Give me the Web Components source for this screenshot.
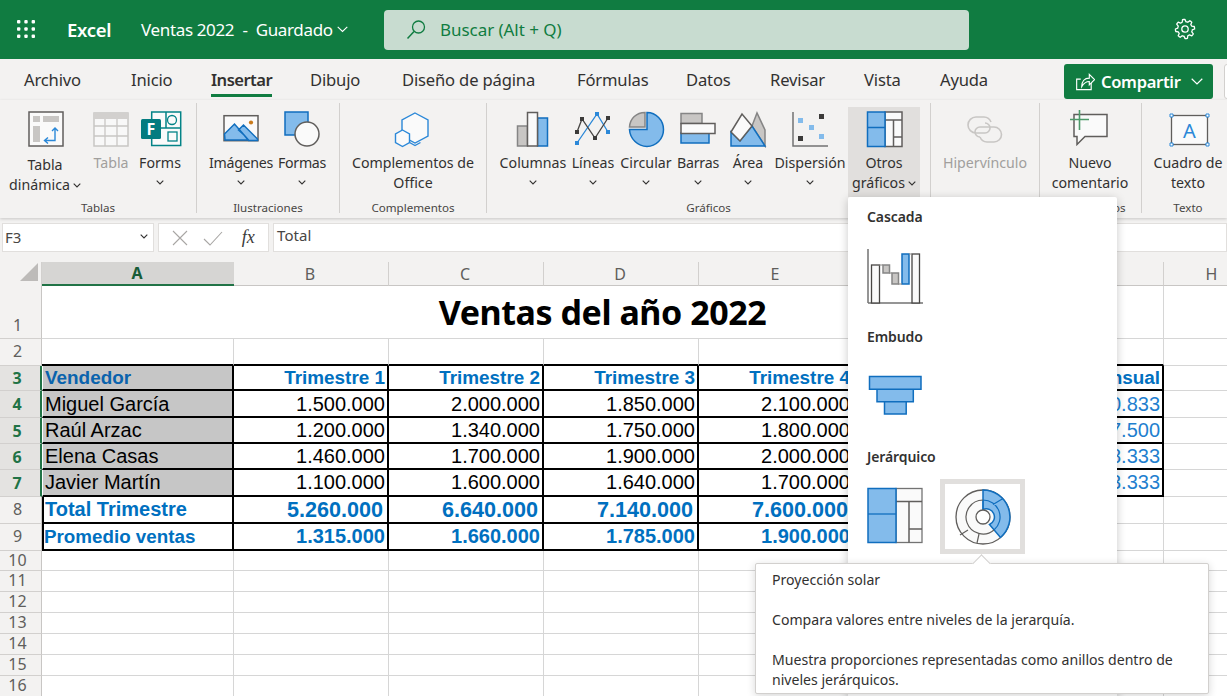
<!DOCTYPE html>
<html lang="es">
<head>
<meta charset="utf-8">
<title>Ventas 2022</title>
<style>
  html, body { margin: 0; height: 100%; overflow: hidden; }
  body { font-family: "Noto Sans", "Open Sans", sans-serif; color: #323130; background: #fff; }
  #app { position: relative; width: 1227px; height: 696px; overflow: hidden; }
</style>
</head>
<body>
<div id="app">
  <xl-titlebar></xl-titlebar>
  <xl-tabs></xl-tabs>
  <xl-ribbon>
    <xl-group label="Tablas" style="width:197px">
      <xl-btn icon="pivot" chev="inline" drop="2" style="width:80px;margin-left:5px">Tabla<br>dinámica</xl-btn>
      <xl-btn icon="table" disabled style="width:42px;margin-left:5px">Tabla</xl-btn>
      <xl-btn icon="forms" chev="block" style="width:48px;margin-left:4px">Forms</xl-btn>
    </xl-group>
    <xl-group label="Ilustraciones" style="width:143px">
      <xl-btn icon="image" chev="block" style="width:66px;margin-left:11px;letter-spacing:-.3px">Imágenes</xl-btn>
      <xl-btn icon="shapes" chev="block" style="width:52px;margin-left:2px;letter-spacing:-.3px">Formas</xl-btn>
    </xl-group>
    <xl-group label="Complementos" style="width:147px">
      <xl-btn icon="addins" style="width:134px;margin-left:6px">Complementos de<br>Office</xl-btn>
    </xl-group>
    <xl-group label="Gráficos" style="width:444px">
      <xl-btn icon="columns" chev="block" style="width:70px;margin-left:11px">Columnas</xl-btn>
      <xl-btn icon="lines" chev="block" style="width:46px;margin-left:2px">Líneas</xl-btn>
      <xl-btn icon="pie" chev="block" style="width:56px;margin-left:2px">Circular</xl-btn>
      <xl-btn icon="bars" chev="block" style="width:44px;margin-left:2px;letter-spacing:-.2px">Barras</xl-btn>
      <xl-btn icon="area" chev="block" style="width:44px;margin-left:6px">Área</xl-btn>
      <xl-btn icon="scatter" chev="block" style="width:76px;margin-left:2px">Dispersión</xl-btn>
      <xl-btn icon="other" chev="inline" active style="width:72px">Otros<br>gráficos</xl-btn>
    </xl-group>
    <xl-group label="" style="width:109px">
      <xl-btn icon="link" disabled style="width:100px;margin-left:4px">Hipervínculo</xl-btn>
    </xl-group>
    <xl-group label="Comentarios" style="width:102px">
      <xl-btn icon="comment" style="width:90px;margin-left:5px">Nuevo<br>comentario</xl-btn>
    </xl-group>
    <xl-group label="Texto" style="width:92px">
      <xl-btn icon="textbox" style="width:92px">Cuadro de<br>texto</xl-btn>
    </xl-group>
  </xl-ribbon>
  <xl-formula-bar cell="F3" value="Total"></xl-formula-bar>
  <xl-sheet></xl-sheet>
  <xl-chart-menu></xl-chart-menu>
  <xl-tooltip>
    <p>Proyección solar</p>
    <p>Compara valores entre niveles de la jerarquía.</p>
    <p>Muestra proporciones representadas como anillos dentro de niveles jerárquicos.</p>
  </xl-tooltip>
</div>

<script>
const ICON_CSS = `
  svg .b { fill: #83bbeb; stroke: #106ebe; stroke-width: 1.5; }
  svg .g { fill: #c8c6c4; stroke: #858585; stroke-width: 1.5; }
  svg .w { fill: #fafafa; stroke: #605e5c; stroke-width: 1.5; }
  svg .l { fill: none; stroke: #605e5c; stroke-width: 1.5; }
`;

// all icons are drawn in page coordinates, the viewBox cuts them out
const ICONS = {
  pivot: ['21 108 48 40', `
    <rect class="w" x="29" y="112" width="34" height="34" stroke="#737373"/>
    <path fill="#c8c6c4" d="M33 116h7v6h-7zM43 116h16v6H43zM33 126h7v16h-7z"/>
    <path fill="none" stroke="#2b88d8" stroke-width="1.4" d="M55 128v12.5H45M52 131l3-3 3 3M48 137.500l-3.500 3 3.500 3"/>`],
  table: ['87 108 48 40', `
    <path fill="#f8f8f8" stroke="#c8c6c4" stroke-width="1.5" d="M94 113h34v33H94z"/>
    <path fill="#d2d0ce" d="M94 113h34v6H94z"/>
    <path fill="none" stroke="#c8c6c4" stroke-width="1.3" d="M94 126h34M94 136h34M105 119v27M117 119v27"/>`],
  forms: ['136 108 48 40', `
    <rect x="151.700" y="112" width="29" height="33.500" fill="#fafafa" stroke="#038387" stroke-width="1.500"/>
    <path fill="none" stroke="#038387" stroke-width="1.500" d="M161 128h19.700M166 112v16"/>
    <circle cx="172" cy="120" r="4.500" fill="none" stroke="#038387" stroke-width="1.300"/>
    <rect x="168" y="132" width="9" height="9" fill="none" stroke="#038387" stroke-width="1.300"/>
    <rect x="141" y="119" width="20" height="20" rx="1.500" fill="#037c80"/>
    <text x="151" y="135" text-anchor="middle" font-family="Noto Sans, sans-serif" font-weight="700" font-size="16" fill="#fff">F</text>`],
  image: ['217 108 48 40', `
    <rect x="224" y="115.700" width="34" height="25" fill="#fafafa" stroke="#605e5c" stroke-width="1.500"/>
    <path class="b" stroke-width="1.200" d="M224.500 134l10-10 14 16h-23.500zM244 135l-5.500-5 5-5 14 14v1.500h-9z"/>
    <circle cx="251" cy="122.500" r="2.100" fill="#ca7b1c"/>`],
  shapes: ['278 108 48 40', `
    <rect class="b" x="285" y="112" width="23" height="23"/>
    <circle class="w" cx="307" cy="134" r="12"/>`],
  addins: ['389 108 48 40', `
    <path fill="#fafafa" stroke="#2b88d8" stroke-width="1.400" d="M415 113l13 7v16l-13 7-13-7v-16z"/>
    <path fill="#fafafa" stroke="#2b88d8" stroke-width="1.400" d="M402.500 130l7 4v8.500l-7 4-7-4V134z"/>
    <path fill="none" stroke="#2b88d8" stroke-width="1.400" d="M409.500 142.500l5.500 3 5.500-3"/>`],
  columns: ['509 108 48 40', `
    <rect class="g" x="517.500" y="126" width="10" height="20"/>
    <rect class="b" x="537.500" y="118" width="10" height="28"/>
    <rect class="w" x="527.500" y="112.500" width="10" height="33.500"/>`],
  lines: ['569 108 48 40', `
    <path fill="none" stroke="#2b88d8" stroke-width="1.300" d="M577 143l20-29 11 18"/>
    <path fill="none" stroke="#484644" stroke-width="1.300" d="M577 132l5-13 13 19 13-20"/>
    <path fill="#2b88d8" d="M575 141h4v4h-4zM595 112h4v4h-4zM606 130h4v4h-4z"/>
    <path fill="#3b3a39" d="M575 130h4v4h-4zM580 117h4v4h-4zM593 136h4v4h-4zM606 116h4v4h-4z"/>`],
  pie: ['622 108 48 40', `
    <path class="g" d="M645 112.500v14.500h-15.500c.5-8.500 7-14.500 15.500-14.500z"/>
    <path class="b" d="M647 112.500c9 0 16.500 7.500 16.500 17s-7.500 17-16.500 17-17-7.500-17.500-17h17.500z"/>`],
  bars: ['674 108 48 40', `
    <rect class="g" x="681" y="113.500" width="21" height="10"/>
    <rect class="b" x="681" y="133" width="28" height="10"/>
    <rect class="w" x="681" y="123.500" width="34" height="10"/>`],
  area: ['724 108 48 40', `
    <path class="g" stroke-width="1.300" d="M752 126l5-13 8 17v16z"/>
    <path class="b" d="M731 132l9 9 12-15 13 20h-34z"/>
    <path class="w" d="M731 132l11-18 10 12-12 15z"/>`],
  scatter: ['786 108 48 40', `
    <path fill="none" stroke="#737373" stroke-width="1.500" d="M793 112v34h35"/>
    <path fill="#83bbeb" d="M798 118h5v5h-5zM809 125h5v5h-5zM819 134h5v5h-5z"/>
    <path fill="#3b3a39" d="M819 114h5v5h-5zM798 136h5v5h-5z"/>`],
  other: ['860 108 48 40', `
    <rect class="w" x="885" y="112" width="17" height="34.500"/>
    <path class="l" d="M885 120h17M893.500 120v26.500M893.500 137h8.500"/>
    <rect class="b" x="867.500" y="112" width="17.500" height="34.500"/>
    <path fill="none" stroke="#106ebe" stroke-width="1.500" d="M867.500 127.500H885"/>`],
  link: ['961 108 48 40', `
    <g fill="none" stroke="#c8c6c4" stroke-width="1.600">
      <path d="M985 133h-9a8 8 0 0 1 0-16h8a8 8 0 0 1 7 5"/>
      <path d="M980 127h14a7.500 7.500 0 0 1 0 15h-7a8 8 0 0 1-7-5"/>
      <path d="M980 127a5 5 0 0 0 0 10M985 133a5 5 0 0 0 0-10"/>
    </g>`],
  comment: ['1066 108 48 40', `
    <path fill="#fafafa" stroke="#605e5c" stroke-width="1.500" d="M1074 114.500h33v22h-22l-8 8v-8h-3z"/>
    <path fill="none" stroke="#4c9a6a" stroke-width="1.600" d="M1079.500 110v20M1070 119.500h19"/>`],
  textbox: ['1164 108 48 40', `
    <rect x="1171.500" y="115.500" width="36" height="29" fill="#fafafa" stroke="#605e5c" stroke-width="1.300"/>
    <path fill="#fff" stroke="#2b88d8" stroke-width="1" d="M1170 114h3v3h-3zM1206 114h3v3h-3zM1170 143h3v3h-3zM1206 143h3v3h-3z"/>
    <text x="1189.500" y="138" text-anchor="middle" font-family="Noto Sans, sans-serif" font-size="20" fill="#2b88d8">A</text>`],
  waterfall: ['866 247 58 58', `
    <path fill="none" stroke="#737373" stroke-width="1.500" d="M868 249v54M868 303h55"/>
    <rect fill="#fafafa" stroke="#484644" stroke-width="1.300" x="871.500" y="265" width="8" height="38"/>
    <rect class="g" x="883" y="265" width="6.500" height="8"/>
    <rect class="g" x="892" y="273" width="6.500" height="11"/>
    <rect class="b" x="902" y="254" width="7" height="30"/>
    <rect fill="#fafafa" stroke="#484644" stroke-width="1.300" x="912" y="254" width="7.500" height="49"/>
    <path fill="none" stroke="#8a8886" d="M879 265h4M889 273h3M898 284h4M909 254h3"/>`],
  funnel: ['866 367 58 58', `
    <path class="b" d="M869.500 376.500h51.500v12.700h-51.500zM877 389.200h36.300v12.500H877zM884.500 401.700h21.700v12.300h-21.700z"/>`],
  treemap: ['866 487 58 58', `
    <rect fill="#fafafa" stroke="#737373" stroke-width="1.300" x="896" y="488.500" width="26" height="54"/>
    <path class="l" stroke-width="1.200" d="M896 501.500h26M909 501.500v41M909 529h13"/>
    <rect class="b" x="868" y="488.500" width="28" height="54"/>
    <path fill="none" stroke="#106ebe" stroke-width="1.300" d="M868 514h28"/>`],
  sunburst: ['954 487 58 58', `
    <circle cx="983" cy="516" r="27" fill="#fafafa" stroke="#605e5c" stroke-width="1.300"/>
    <path class="b" stroke-width="1.200" d="M983 489a27 27 0 0 1 17.500 47.500l-11-13A7.500 7.500 0 0 0 983 508.500z"/>
    <path fill="none" stroke="#106ebe" stroke-width="1.200" d="M983 499a17 17 0 0 1 11 30M983 499v10M1003 497.500l-10 6"/>
    <path fill="none" stroke="#605e5c" stroke-width="1.200" d="M994 529a17 17 0 1 1-11-30"/>
    <circle cx="983" cy="516" r="7" fill="#fff" stroke="#605e5c" stroke-width="1.300"/>
    <path fill="none" stroke="#605e5c" stroke-width="1.200" d="M968 529l-8 5M979 533l-2 9"/>`]
};

function svgIcon(name, w, h) {
  const [box, body] = ICONS[name];
  return `<svg width="${w}" height="${h}" viewBox="${box}" aria-hidden="true">${body}</svg>`;
}

const CHEVRON = `<svg class="chev" width="8" height="5" viewBox="0 0 8 5"><path d="M.7.7 4 4 7.300.7" fill="none" stroke="#323130" stroke-width="1.100"/></svg>`;

class XlTitlebar extends HTMLElement {
  constructor() {
    super();
    this.attachShadow({ mode: 'open' });
    let dots = '';
    for (let y = 0; y < 3; y++) {
      for (let x = 0; x < 3; x++) {
        dots += `<rect x="${x * 7.300}" y="${y * 7.300}" width="3.400" height="3.400" rx="1"/>`;
      }
    }
    // gear outline
    let gear = '';
    for (let i = 0; i < 48; i++) {
      const a = i / 48 * Math.PI * 2;
      const tooth = (i + 2) % 6 < 3 ? 9.600 : 7.300;
      gear += (i ? 'L' : 'M') + (10 + tooth * Math.cos(a)).toFixed(2) + ' ' + (10 + tooth * Math.sin(a)).toFixed(2);
    }
    this.shadowRoot.innerHTML = `
      <style>
        :host { display: flex; align-items: center; height: 59px; padding-left: 17px; background: #107c41; color: #fff; overflow: hidden; }
        .waffle { flex: none; width: 18px; height: 18px; fill: #fff; margin-top: -2px; }
        .app { flex: none; width: 74px; margin-left: 32px; font-size: 18.500px; font-weight: 600; letter-spacing: -.3px; }
        .doc { flex: none; width: 243px; display: flex; align-items: center; gap: 0; font-size: 17px; letter-spacing: -.35px; white-space: pre; }
        .search { flex: none; box-sizing: border-box; width: 585px; height: 40px; display: flex; align-items: center; padding-left: 21px; gap: 13px; border-radius: 4px; background: #c8dcd0; color: #107c41; font-size: 17px; letter-spacing: -.05px; }
        .gear { flex: none; margin-left: 205px; margin-top: -2px; }
        .me { flex: none; margin-left: 31px; width: 18px; height: 18px; border: 1.500px solid #fff; border-radius: 50%; }
      </style>
      <svg class="waffle" viewBox="0 0 18 18">${dots}</svg>
      <span class="app">Excel</span>
      <span class="doc">Ventas 2022  -  Guardado <svg width="11" height="7" viewBox="0 0 11 7"><path d="M.7.8 5.500 5.500 10.300.8" fill="none" stroke="#fff" stroke-width="1.100"/></svg></span>
      <div class="search">
        <svg width="22" height="22" viewBox="0 0 22 22"><circle cx="13.500" cy="8" r="6" fill="none" stroke="#107c41" stroke-width="1.300"/><path d="M9 12.500 2.500 19.500" stroke="#107c41" stroke-width="1.500"/></svg>
        <span>Buscar (Alt + Q)</span>
      </div>
      <svg class="gear" width="22" height="22" viewBox="-1 -1 22 22"><path d="${gear}Z" fill="none" stroke="#fff" stroke-width="1.300" stroke-linejoin="round"/><circle cx="10" cy="10" r="3.200" fill="none" stroke="#fff" stroke-width="1.300"/></svg>
      <div class="me"></div>`;
  }
}

class XlTabs extends HTMLElement {
  constructor() {
    super();
    this.attachShadow({ mode: 'open' });
    const tabs = [['Archivo', 107], ['Inicio', 80], ['Insertar', 99], ['Dibujo', 92], ['Diseño de página', 175], ['Fórmulas', 109], ['Datos', 84], ['Revisar', 94], ['Vista', 76], ['Ayuda', 124]];
    this.shadowRoot.innerHTML = `
      <style>
        :host { display: flex; height: 41px; padding-left: 24px; background: #f3f2f1; font-size: 16.600px; letter-spacing: -.17px; color: #323130; }
        .tab { flex: none; position: relative; line-height: 42px; white-space: nowrap; }
        .tab span { display: inline-block; }
        .on { font-weight: 600; letter-spacing: -.55px; }
        .on span { border-bottom: 3px solid #107c41; height: 35px; line-height: 42px; }
        .share { flex: none; box-sizing: border-box; width: 149px; height: 35px; margin-top: 5px; display: flex; align-items: center; padding-left: 12px; gap: 6px; border-radius: 3px; background: #107c41; color: #fff; font-size: 16.500px; font-weight: 600; letter-spacing: -.3px; }
        .more { flex: none; width: 60px; height: 35px; margin: 5px 0 0 11px; box-sizing: border-box; background: #fff; border: 1px solid #d2d0ce; border-radius: 3px; }
      </style>
      ${tabs.map(([t, w]) => `<div class="tab ${t === 'Insertar' ? 'on' : ''}" style="width:${w}px"><span>${t}</span></div>`).join('')}
      <div class="share">
        <svg width="19" height="19" viewBox="0 0 20 19" fill="none" stroke="#fff" stroke-width="1.200"><path d="M5 7H.7V18H16V11"/><path d="M6 15c0-6 3-9 8-9V2l5.500 5.500L14 13V9.500c-4 0-6 2-8 5.500z"/></svg>
        <span>Compartir</span>
        <svg style="margin-left:4px" width="12" height="7" viewBox="0 0 12 7"><path d="M.7.8 6 6 11.300.8" fill="none" stroke="#fff" stroke-width="1.200"/></svg>
      </div>
      <div class="more"></div>`;
  }
}

class XlRibbon extends HTMLElement {
  constructor() {
    super();
    this.attachShadow({ mode: 'open' });
    this.shadowRoot.innerHTML = `
      <style>
        :host { display: flex; box-sizing: border-box; height: 118px; padding-top: 3px; background: #f3f2f1; box-shadow: 0 1px 3px rgba(0,0,0,.18); position: relative; overflow: hidden; }
      </style>
      <slot></slot>`;
  }
}

class XlGroup extends HTMLElement {
  constructor() {
    super();
    this.attachShadow({ mode: 'open' });
    this.shadowRoot.innerHTML = `
      <style>
        :host { display: block; flex: none; box-sizing: border-box; height: 110px; border-right: 1px solid #d2d0ce; }
        :host(:last-child) { border-right: 0; }
        .row { display: flex; height: 90px; margin-top: 4px; }
        .name { margin-top: 3px; line-height: 16px; font-size: 11.600px; color: #484644; text-align: center; white-space: nowrap; }
      </style>
      <div class="row"><slot></slot></div>
      <div class="name">${this.getAttribute('label')}</div>`;
  }
}

class XlBtn extends HTMLElement {
  constructor() {
    super();
    this.attachShadow({ mode: 'open' });
    const chev = this.getAttribute('chev');
    const drop = this.getAttribute('drop') || 0;
    this.shadowRoot.innerHTML = `
      <style>
        ${ICON_CSS}
        :host { display: flex; flex: none; flex-direction: column; align-items: center; box-sizing: border-box; height: 90px; padding-top: 1px; font-size: 14.200px; line-height: 20px; text-align: center; white-space: nowrap; color: #323130; }
        :host([active]) { background: #e1dfdd; }
        :host([disabled]) { color: #a19f9d; }
        .label { margin-top: ${5 + +drop}px; }
        .chev { vertical-align: 2px; margin-left: 3px; }
        .blockchev { height: 20px; line-height: 17px; }
        .blockchev .chev { margin: 0; }
      </style>
      ${svgIcon(this.getAttribute('icon'), 48, 40)}
      <div class="label"><slot></slot>${chev === 'inline' ? CHEVRON : ''}</div>
      ${chev === 'block' ? `<div class="blockchev">${CHEVRON}</div>` : ''}`;
  }
}

class XlFormulaBar extends HTMLElement {
  constructor() {
    super();
    this.attachShadow({ mode: 'open' });
    this.shadowRoot.innerHTML = `
      <style>
        :host { display: flex; box-sizing: border-box; height: 44px; padding: 5px 0 0 2px; gap: 4px; background: #f3f2f1; font-size: 15px; color: #484644; }
        .box { box-sizing: border-box; height: 29px; background: #fff; border: 1px solid #e1dfdd; display: flex; align-items: center; }
        .name { width: 152px; padding: 0 5px 2px 2px; justify-content: space-between; }
        .fns { width: 111px; justify-content: space-around; padding: 0 6px; }
        .fx { font: italic 500 18px "Liberation Serif", serif; color: #3b3a39; margin-left: 4px; }
        .input { flex: 1; padding: 0 3px; align-items: flex-start; line-height: 23px; letter-spacing: .1px; }
      </style>
      <div class="box name"><span>${this.getAttribute('cell')}</span>${CHEVRON}</div>
      <div class="box fns">
        <svg width="16" height="16" viewBox="0 0 16 16"><path d="M1 1l14 14M15 1 1 15" stroke="#a8a6a4" stroke-width="1.100"/></svg>
        <svg width="20" height="16" viewBox="0 0 20 16"><path d="M1 9l6 6L19 2" fill="none" stroke="#a8a6a4" stroke-width="1.100"/></svg>
        <span class="fx">fx</span>
      </div>
      <div class="box input">${this.getAttribute('value')}</div>`;
  }
}

class XlSheet extends HTMLElement {
  constructor() {
    super();
    this.attachShadow({ mode: 'open' });
    const columns = [42, 192, 155, 155, 155, 155, 155, 155, 98];
    const rows = [24, 53, 27, 25, 27, 26, 26, 27, 27, 27, 20, 21, 21, 21, 21, 21, 21];
    const letters = ['A', 'B', 'C', 'D', 'E', '', '', 'H'];
    const table = {
      3: ['Vendedor', 'Trimestre 1', 'Trimestre 2', 'Trimestre 3', 'Trimestre 4', '', 'Promedio mensual'],
      4: ['Miguel García', '1.500.000', '2.000.000', '1.850.000', '2.100.000', '', '620.833'],
      5: ['Raúl Arzac', '1.200.000', '1.340.000', '1.750.000', '1.800.000', '', '507.500'],
      6: ['Elena Casas', '1.460.000', '1.700.000', '1.900.000', '2.000.000', '', '588.333'],
      7: ['Javier Martín', '1.100.000', '1.600.000', '1.640.000', '1.700.000', '', '503.333'],
      8: ['Total Trimestre', '5.260.000', '6.640.000', '7.140.000', '7.600.000'],
      9: ['Promedio ventas', '1.315.000', '1.660.000', '1.785.000', '1.900.000']
    };
    let html = '<div class="corner"><svg width="20" height="20" viewBox="0 0 20 20"><path d="M19 1v18H1z" fill="#bdbbb9"/></svg></div>';
    letters.forEach((l, i) => {
      html += `<div class="head ${i === 0 ? 'sel' : ''}">${l}</div>`;
    });
    for (let r = 1; r <= 16; r++) {
      const selected = r >= 3 && r <= 7;
      html += `<div class="num ${selected ? 'sel' : ''} ${r === 1 ? 'low' : ''}">${r}</div>`;
      if (r === 1) {
        html += '<div class="cell title" style="grid-column: span 7">Ventas del año 2022</div><div class="cell"></div>';
        continue;
      }
      for (let c = 0; c < 8; c++) {
        const data = table[r];
        const inTable = data && c < (r <= 7 ? 7 : 5);
        let cls = 'cell';
        if (inTable) cls += ' box';
        if (r === 2 && c < 7) cls += ' above';
        if (data && c === 0) cls += ' first';
        if (selected && c === 0) cls += ' fill';
        if (r === 3) cls += ' hdr';
        if (r === 4) cls += ' r4';
        if (r >= 8) cls += ' sum r' + r;
        if (selected && r > 3 && c === 6) cls += ' blue';
        html += `<div class="${cls}">${inTable && data[c] ? `<span>${data[c]}</span>` : ''}</div>`;
      }
    }
    this.shadowRoot.innerHTML = `
      <style>
        :host { display: block; height: 438px; overflow: hidden; background: #f3f2f1; }
        .grid { display: grid; margin-top: 0; grid-template-columns: ${columns.join('px ')}px; grid-template-rows: ${rows.join('px ')}px; font-family: "Liberation Sans", Arial, sans-serif; background: #fff; }
        .corner { background: #f3f2f1; border-right: 1px solid #d2d0ce; padding-left: 19px; box-sizing: border-box; }
        .corner svg { display: block; }
        .head { box-sizing: border-box; display: flex; align-items: center; justify-content: center; padding-right: 2px; background: #f3f2f1; border-right: 1px solid #d2d0ce; border-bottom: 1px solid #c8c6c4; color: #605e5c; font: 16px "Noto Sans", sans-serif; }
        .head.sel { background: #d6d5d3; color: #185c37; font-weight: 700; border-bottom: 2px solid #217346; border-right: 0; }
        .num { box-sizing: border-box; display: flex; align-items: center; justify-content: center; padding: 0 6px 2px 0; background: #f3f2f1; border-right: 1px solid #c8c6c4; border-bottom: 1px solid #d2d0ce; color: #605e5c; font: 16px "Noto Sans", sans-serif; }
        .num.low { align-items: flex-end; padding-bottom: 2px; }
        .num.sel { background: #e4e3e1; color: #217346; font-weight: 700; border-right: 2px solid #217346; padding-bottom: 0; }
        .cell { box-sizing: border-box; display: flex; align-items: center; justify-content: flex-end; padding-right: 2px; white-space: nowrap; border-right: 1px solid #d6d6d6; border-bottom: 1px solid #d6d6d6; color: #000; }
        .title { justify-content: center; padding: 0; font: 700 34px "Noto Sans", sans-serif; letter-spacing: -.45px; }
        .above { border-bottom: 2px solid #000; }
        .box { border-right: 2px solid #000; border-bottom: 2px solid #000; font-size: 20px; }
        .r4 { padding-top: 1px; }
        .first { justify-content: flex-start; padding-left: 2px; }
        .fill { background: #c6c6c6; border-left: 1px solid #fff; }
        .hdr { color: #0070c0; font-weight: 700; font-size: 18.900px; }
        .hdr.fill { color: #0a63ad; padding-left: 2px; }
        .blue { color: #1f7fcf; }
        .sum { color: #0070c0; font-weight: 700; }
        .sum.first { border-left: 2px solid #000; padding-left: 0; }
        .r8 { font-size: 21.600px; padding-right: 4px; }
        .r8.first { font-size: 20px; padding-left: 1px; }
        .r9 { font-size: 20px; }
        .r9.first { font-size: 18.800px; }
      </style>
      <div class="grid">${html}</div>`;
  }
}

class XlChartMenu extends HTMLElement {
  constructor() {
    super();
    this.attachShadow({ mode: 'open' });
    const section = (title, icons) => `
      <section>
        <h3>${title}</h3>
        <div class="icons">${icons.map(([n, cls]) => `<div class="tile ${cls || ''}">${svgIcon(n, 58, 58)}</div>`).join('')}</div>
      </section>`;
    this.shadowRoot.innerHTML = `
      <style>
        ${ICON_CSS}
        :host { position: absolute; left: 848px; top: 197px; width: 269px; height: 520px; box-sizing: border-box; padding-left: 19px; background: #fff; border-radius: 2px; box-shadow: 0 2px 10px rgba(0,0,0,.22); }
        section { height: 120px; }
        h3 { margin: 0; padding-top: 10px; line-height: 20px; font-size: 14px; font-weight: 600; color: #323130; letter-spacing: -.1px; }
        .icons { display: flex; margin-top: 20px; gap: 17px; }
        .tile { display: flex; height: 58px; margin-left: -1px; }
        .tile svg { display: block; }
        .tile.sel { box-sizing: border-box; width: 85px; height: 75px; margin: -8px 0 0 -1px; border: 5px solid #e1dfdd; align-items: center; justify-content: center; }
      </style>
      ${section('Cascada', [['waterfall']])}
      ${section('Embudo', [['funnel']])}
      ${section('Jerárquico', [['treemap'], ['sunburst', 'sel']])}`;
  }
}

class XlTooltip extends HTMLElement {
  constructor() {
    super();
    this.attachShadow({ mode: 'open' });
    this.shadowRoot.innerHTML = `
      <style>
        :host { position: absolute; left: 755px; top: 563px; width: 454px; height: 131px; box-sizing: border-box; padding: 6px 16px; background: #fff; border: 1px solid #d2d0ce; border-radius: 2px; box-shadow: 0 2px 8px rgba(0,0,0,.16); font-size: 14.100px; line-height: 20px; color: #323130; }
        .arrow { position: absolute; left: 219px; top: -7px; width: 12px; height: 12px; background: #fff; border: 1px solid #d2d0ce; border-width: 1px 0 0 1px; transform: rotate(45deg); }
        ::slotted(p) { margin: 0 0 20px; }
      </style>
      <div class="arrow"></div>
      <slot></slot>`;
  }
}

customElements.define('xl-titlebar', XlTitlebar);
customElements.define('xl-tabs', XlTabs);
customElements.define('xl-ribbon', XlRibbon);
customElements.define('xl-group', XlGroup);
customElements.define('xl-btn', XlBtn);
customElements.define('xl-formula-bar', XlFormulaBar);
customElements.define('xl-sheet', XlSheet);
customElements.define('xl-chart-menu', XlChartMenu);
customElements.define('xl-tooltip', XlTooltip);
</script>
</body>
</html>
